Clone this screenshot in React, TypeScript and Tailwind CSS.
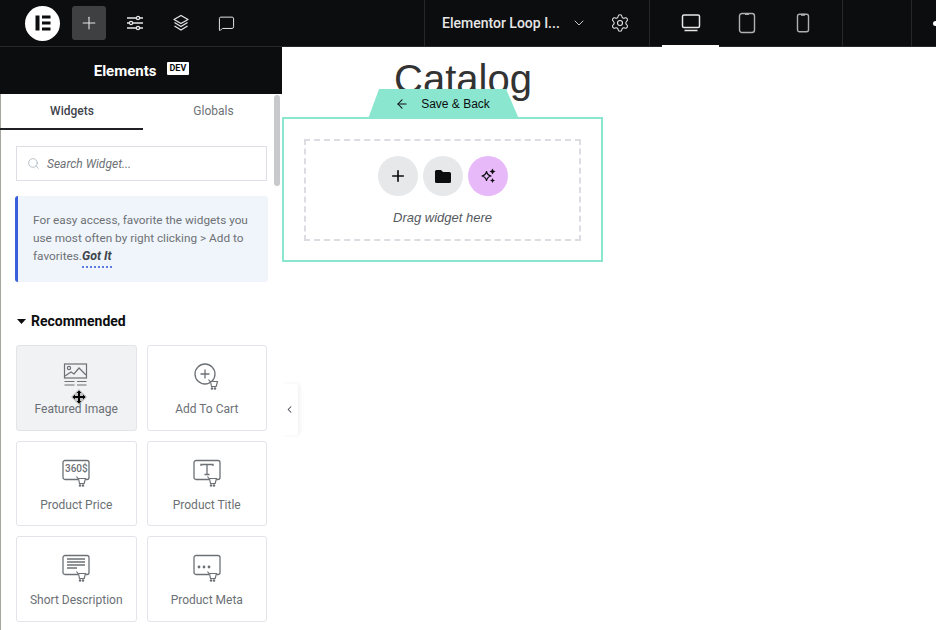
import { ChevronDown, ChevronLeft, MessageSquare, Plus, Search, Settings, ArrowLeft } from 'lucide-react';
import type { ReactNode } from 'react';

function ElementorLogo() {
  return (
    <div className="w-[35px] h-[35px] rounded-full bg-white flex items-center justify-center">
      <svg width="16" height="16" viewBox="0 0 16 16" fill="#0c0d0e">
        <rect x="0.5" y="0.5" width="4" height="15" />
        <rect x="7" y="0.5" width="8.5" height="3" />
        <rect x="7" y="6.5" width="8.5" height="3" />
        <rect x="7" y="12.5" width="8.5" height="3" />
      </svg>
    </div>
  );
}

function SlidersIcon() {
  return (
    <svg width="18" height="18" viewBox="0 0 18 18" fill="none" stroke="#e6e6e6" strokeWidth="1.3">
      <path d="M1 4h9.5M13.5 4H17M1 9h2.5M6.500 9H17M1 14h9.500M13.500 14H17" />
      <circle cx="12" cy="4" r="1.6" />
      <circle cx="5" cy="9" r="1.6" />
      <circle cx="12" cy="14" r="1.6" />
    </svg>
  );
}

function LayersIcon() {
  return (
    <svg width="18" height="18" viewBox="0 0 18 18" fill="none" stroke="#e6e6e6" strokeWidth="1.3" strokeLinejoin="round">
      <path d="M9 1.500l7 4-7 4-7-4z" />
      <path d="M2.500 8.500L9 12.500l6.500-4" />
      <path d="M2.500 12L9 16l6.500-4" />
    </svg>
  );
}

function MonitorIcon() {
  return (
    <svg width="20" height="20" viewBox="0 0 20 20" fill="none" stroke="#e8e8e8" strokeWidth="1.5">
      <rect x="1.500" y="2" width="17" height="12.500" rx="1.500" />
      <path d="M3.500 17.500h13" />
    </svg>
  );
}

function TabletIcon() {
  return (
    <svg width="18" height="22" viewBox="0 0 18 22" fill="none" stroke="#aeb0b3" strokeWidth="1.4">
      <rect x="1.500" y="1.500" width="15" height="19" rx="2.500" />
      <path d="M7 2h4" strokeWidth="2" />
    </svg>
  );
}

function PhoneIcon() {
  return (
    <svg width="14" height="20" viewBox="0 0 14 20" fill="none" stroke="#aeb0b3" strokeWidth="1.4">
      <rect x="1.500" y="1.200" width="11" height="17.600" rx="2" />
      <path d="M5 1.800h4" strokeWidth="2" />
    </svg>
  );
}

// little cart that sits on the corner of every woo widget icon
function Cart({ x, y }: { x: number; y: number }) {
  return (
    <g transform={`translate(${x} ${y})`} fill="#fff" stroke="#6d7176" strokeWidth="1.2">
      <path d="M-1.500 -0.500l1.500 2h7.500l-1.300 5h-4.700l-1-5" />
      <circle cx="2" cy="8.500" r="0.700" />
      <circle cx="5" cy="8.500" r="0.700" />
    </g>
  );
}

function ImageIcon() {
  return (
    <svg width="26" height="26" viewBox="0 0 26 26" fill="none" stroke="#6d7176" strokeWidth="1.2">
      <rect x="1.500" y="1" width="22" height="14" />
      <circle cx="6" cy="5" r="1.600" />
      <path d="M2 13l6-4 3 2 5-6 7 7" />
      <path d="M1.500 18.500h10M14 18.500h9.500M1.500 22h10M14 22h9.500" />
    </svg>
  );
}

function CartPlusIcon() {
  return (
    <svg width="28" height="28" viewBox="0 0 28 28" fill="none" stroke="#6d7176" strokeWidth="1.3">
      <circle cx="12" cy="11" r="10" />
      <path d="M12 6.500v9M7.500 11h9" />
      <Cart x={17} y={17} />
    </svg>
  );
}

function BubbleIcon({ children }: { children: ReactNode }) {
  return (
    <svg width="30" height="28" viewBox="0 0 30 28" fill="none" stroke="#6d7176" strokeWidth="1.3">
      <path d="M17 20.500H4a2 2 0 0 1-2-2V3.500a2 2 0 0 1 2-2h22a2 2 0 0 1 2 2v15a2 2 0 0 1-2 2h-1" />
      {children}
      <Cart x={17} y={18} />
    </svg>
  );
}

function WidgetCard({ icon, label, hover }: { icon: ReactNode; label: string; hover?: boolean }) {
  return (
    <div className={`relative h-[85.5px] border border-[#e3e3ea] rounded-[3px] flex flex-col items-center pt-[17px] ${hover ? 'bg-[#f1f2f3]' : 'bg-white'}`}>
      <div className="h-[34px] flex items-start justify-center">{icon}</div>
      <div className="text-[12px] leading-[24px] text-[#6b7075]">{label}</div>
      {hover && (
        <svg className="absolute left-[52px] top-[41px]" width="20" height="20" viewBox="0 0 20 20">
          <path d="M10 2l8 8-8 8-8-8z" fill="#9a9a9a" opacity="0.55" />
          <path d="M10 4.500v11M4.500 10h11" stroke="#000" strokeWidth="2" />
          <path d="M10 3.500l2.500 2.500h-5zM10 16.500l2.500-2.500h-5zM3.500 10l2.500-2.500v5zM16.500 10l-2.500-2.500v5z" fill="#000" />
        </svg>
      )}
    </div>
  );
}

export default function App() {
  return (
    <div className="w-[936px] h-[630px] overflow-hidden bg-white flex flex-col font-['Roboto',sans-serif]">
      <header className="h-[47px] bg-[#0c0d0e] border-b border-[#26282b] flex items-center shrink-0 text-[#e6e6e6]">
        <div className="w-[424px] flex items-center h-full pl-[25px]">
          <ElementorLogo />
          <div className="ml-[12px] w-[34px] h-[34px] rounded-[3px] bg-[#3f4041] flex items-center justify-center">
            <Plus size={20} strokeWidth={1.3} />
          </div>
          <div className="ml-[20px] flex items-center gap-[28px]">
            <SlidersIcon />
            <LayersIcon />
            <MessageSquare size={17} strokeWidth={1.4} />
          </div>
        </div>
        <div className="w-[225px] h-full border-l border-[#26282b] flex items-center pl-[17px]">
          <span className="text-[14px] font-medium w-[118px] whitespace-nowrap">Elementor Loop I...</span>
          <ChevronDown size={16} strokeWidth={1.3} className="ml-[11px]" />
          <Settings size={20} strokeWidth={1.3} className="ml-[23px]" />
        </div>
        <div className="w-[193px] h-full border-l border-[#26282b] flex items-stretch pl-[12px] gap-0">
          <div className="w-[57px] h-[47px] flex items-center justify-center border-b-2 border-white">
            <MonitorIcon />
          </div>
          <div className="w-[56px] flex items-center justify-center">
            <TabletIcon />
          </div>
          <div className="w-[56px] flex items-center justify-center">
            <PhoneIcon />
          </div>
        </div>
        <div className="w-[69px] h-full border-l border-[#26282b]" />
        <div className="flex-1 h-full border-l border-[#26282b] flex items-center justify-end">
          <div className="w-[3px] h-[5px] rounded-l-full bg-white" />
        </div>
      </header>

      <div className="flex-1 flex min-h-0">
        <aside className="relative w-[282px] shrink-0 flex flex-col overflow-hidden shadow-[inset_1px_0_0_#a8a4a0]">
          <div className="h-[47px] bg-[#0c0d0e] flex items-center justify-center text-white pl-[1px] pt-[1px] shrink-0">
            <span className="text-[15px] font-bold">Elements</span>
            <span className="ml-[10px] -mt-[6px] bg-white text-[#0c0d0e] text-[9px] font-bold leading-[13px] px-[3px] rounded-[1px]">DEV</span>
          </div>
          <div className="h-[36px] flex text-[12px] shrink-0">
            <div className="w-[143px] flex items-center justify-center font-medium text-[#3f444b] border-b-2 border-[#1f2124] pl-[1px]">Widgets</div>
            <div className="w-[139px] flex items-center justify-center text-[#6d7176] pb-[2px] pl-[2px]">Globals</div>
          </div>
          <div className="absolute right-[2px] top-[48px] w-[6px] h-[91px] rounded-full bg-[#c8c9cc]" />

          <div className="pl-[16px] pr-[15px] pt-[16px]">
            <div className="h-[35px] border border-[#dedee6] flex items-center pl-[10px] gap-[7px]">
              <Search size={13} strokeWidth={1.4} className="text-[#a4afb7]" />
              <span className="text-[12px] italic text-[#6d7176]">Search Widget...</span>
            </div>
            <div className="mt-[15px] h-[86px] -ml-px w-[253px] bg-[#f0f5fb] border-l-[3px] border-[#3b5fdc] rounded-[3px] pl-[15px] pt-[15px] text-[11.8px] leading-[18px] text-[#6d7176]">
              For easy access, favorite the widgets you<br />
              use most often by right clicking &gt; Add to<br />
              favorites.
              <span className="relative font-bold italic text-[12.4px] text-[#3f444b]">
                Got It
                <span className="absolute left-0 right-0 top-[18px] border-b-2 border-dotted border-[#5b7be0]" />
              </span>
            </div>
            <div className="mt-[29px] flex items-center h-[20px] text-[14px] font-bold text-[#0c0d0e]">
              <svg width="9" height="5" viewBox="0 0 9 5" fill="#0c0d0e" className="ml-[1px] mr-[5px]"><path d="M0 0h9L4.500 5z" /></svg>
              Recommended
            </div>
            <div className="mt-[14px] grid grid-cols-2 gap-x-[10px] gap-y-[10px]">
              <WidgetCard hover icon={<ImageIcon />} label="Featured Image" />
              <WidgetCard icon={<CartPlusIcon />} label="Add To Cart" />
              <WidgetCard
                label="Product Price"
                icon={
                  <BubbleIcon>
                    <text x="4" y="13" fontSize="10" fontWeight="500" fill="#6d7176" stroke="none" fontFamily="'Roboto',sans-serif">360$</text>
                  </BubbleIcon>
                }
              />
              <WidgetCard
                label="Product Title"
                icon={
                  <BubbleIcon>
                    <path d="M9 7V5.500h12V7M15 5.500v10M12.500 15.500h5" />
                  </BubbleIcon>
                }
              />
              <WidgetCard
                label="Short Description"
                icon={
                  <BubbleIcon>
                    <path d="M6 5h18M6 8h18M6 11h18M6 14h10" />
                  </BubbleIcon>
                }
              />
              <WidgetCard
                label="Product Meta"
                icon={
                  <BubbleIcon>
                    <g fill="#6d7176" stroke="none">
                      <circle cx="7" cy="13" r="1.400" />
                      <circle cx="12" cy="13" r="1.400" />
                      <circle cx="17" cy="13" r="1.400" />
                    </g>
                  </BubbleIcon>
                }
              />
            </div>
          </div>
        </aside>

        <main className="relative flex-1 min-w-0 font-['Liberation_Sans',sans-serif]">
          <h1 className="ml-[112px] mt-[9px] text-[40px] leading-[46px] text-[#333]">Catalog</h1>
          <div className="relative mt-[15px] w-[321px] h-[145px] border-2 border-[#8ae6cf] px-[20px] pt-[20px]">
            <div className="h-[102px] border-2 border-dashed border-[#dcdde3] flex flex-col items-center pt-[15px]">
              <div className="flex gap-[5px]">
                <div className="w-[40px] h-[40px] rounded-full bg-[#e6e8ea] flex items-center justify-center text-[#0c0d0e]"><Plus size={18} strokeWidth={2.2} /></div>
                <div className="w-[40px] h-[40px] rounded-full bg-[#e6e8ea] flex items-center justify-center">
                  <svg width="16" height="13" viewBox="0 0 16 13" fill="#0c0d0e">
                    <path d="M1.500 0h4.500l2 2h6.500a1.500 1.500 0 0 1 1.500 1.500v8a1.500 1.500 0 0 1-1.500 1.500h-13a1.500 1.500 0 0 1-1.500-1.500v-10a1.500 1.500 0 0 1 1.500-1.500z" />
                  </svg>
                </div>
                <div className="w-[40px] h-[40px] rounded-full bg-[#e8b9f9] flex items-center justify-center">
                  <svg width="16" height="16" viewBox="0 0 16 16">
                    <path d="M6.500 3.500c.7 3 1.500 3.800 4.500 4.500-3 .7-3.800 1.500-4.500 4.500-.7-3-1.500-3.800-4.500-4.500 3-.7 3.800-1.500 4.500-4.500z" fill="none" stroke="#0c0d0e" strokeWidth="1.200" strokeLinejoin="round" />
                    <path d="M12.500 0.500l1 2 2 1-2 1-1 2-1-2-2-1 2-1zM12.500 10l.8 1.700 1.700.8-1.700.8-.8 1.700-.8-1.700-1.700-.8 1.700-.8z" fill="#0c0d0e" />
                  </svg>
                </div>
              </div>
              <div className="mt-[12px] text-[13px] italic text-[#555a60]">Drag widget here</div>
            </div>
            <div className="absolute left-[84px] -top-[30px] w-[151px] h-[30px] bg-[#8ae6cf] [clip-path:polygon(11px_0,138px_0,100%_100%,0_100%)] flex items-center justify-center text-[12px] text-[#0c0d0e] pr-[2px] pb-[1px]">
              <ArrowLeft size={14} strokeWidth={1.8} className="mr-[12px]" />
              Save &amp; Back
            </div>
          </div>
          <div className="absolute left-0 top-[337px] w-[16px] h-[51px] bg-white rounded-r-[3px] shadow-[2px_0_4px_rgba(0,0,0,0.06)] flex items-center justify-center pr-[2px]">
            <ChevronLeft size={11} strokeWidth={2.2} className="text-[#3f444b]" />
          </div>
        </main>
      </div>
    </div>
  );
}
